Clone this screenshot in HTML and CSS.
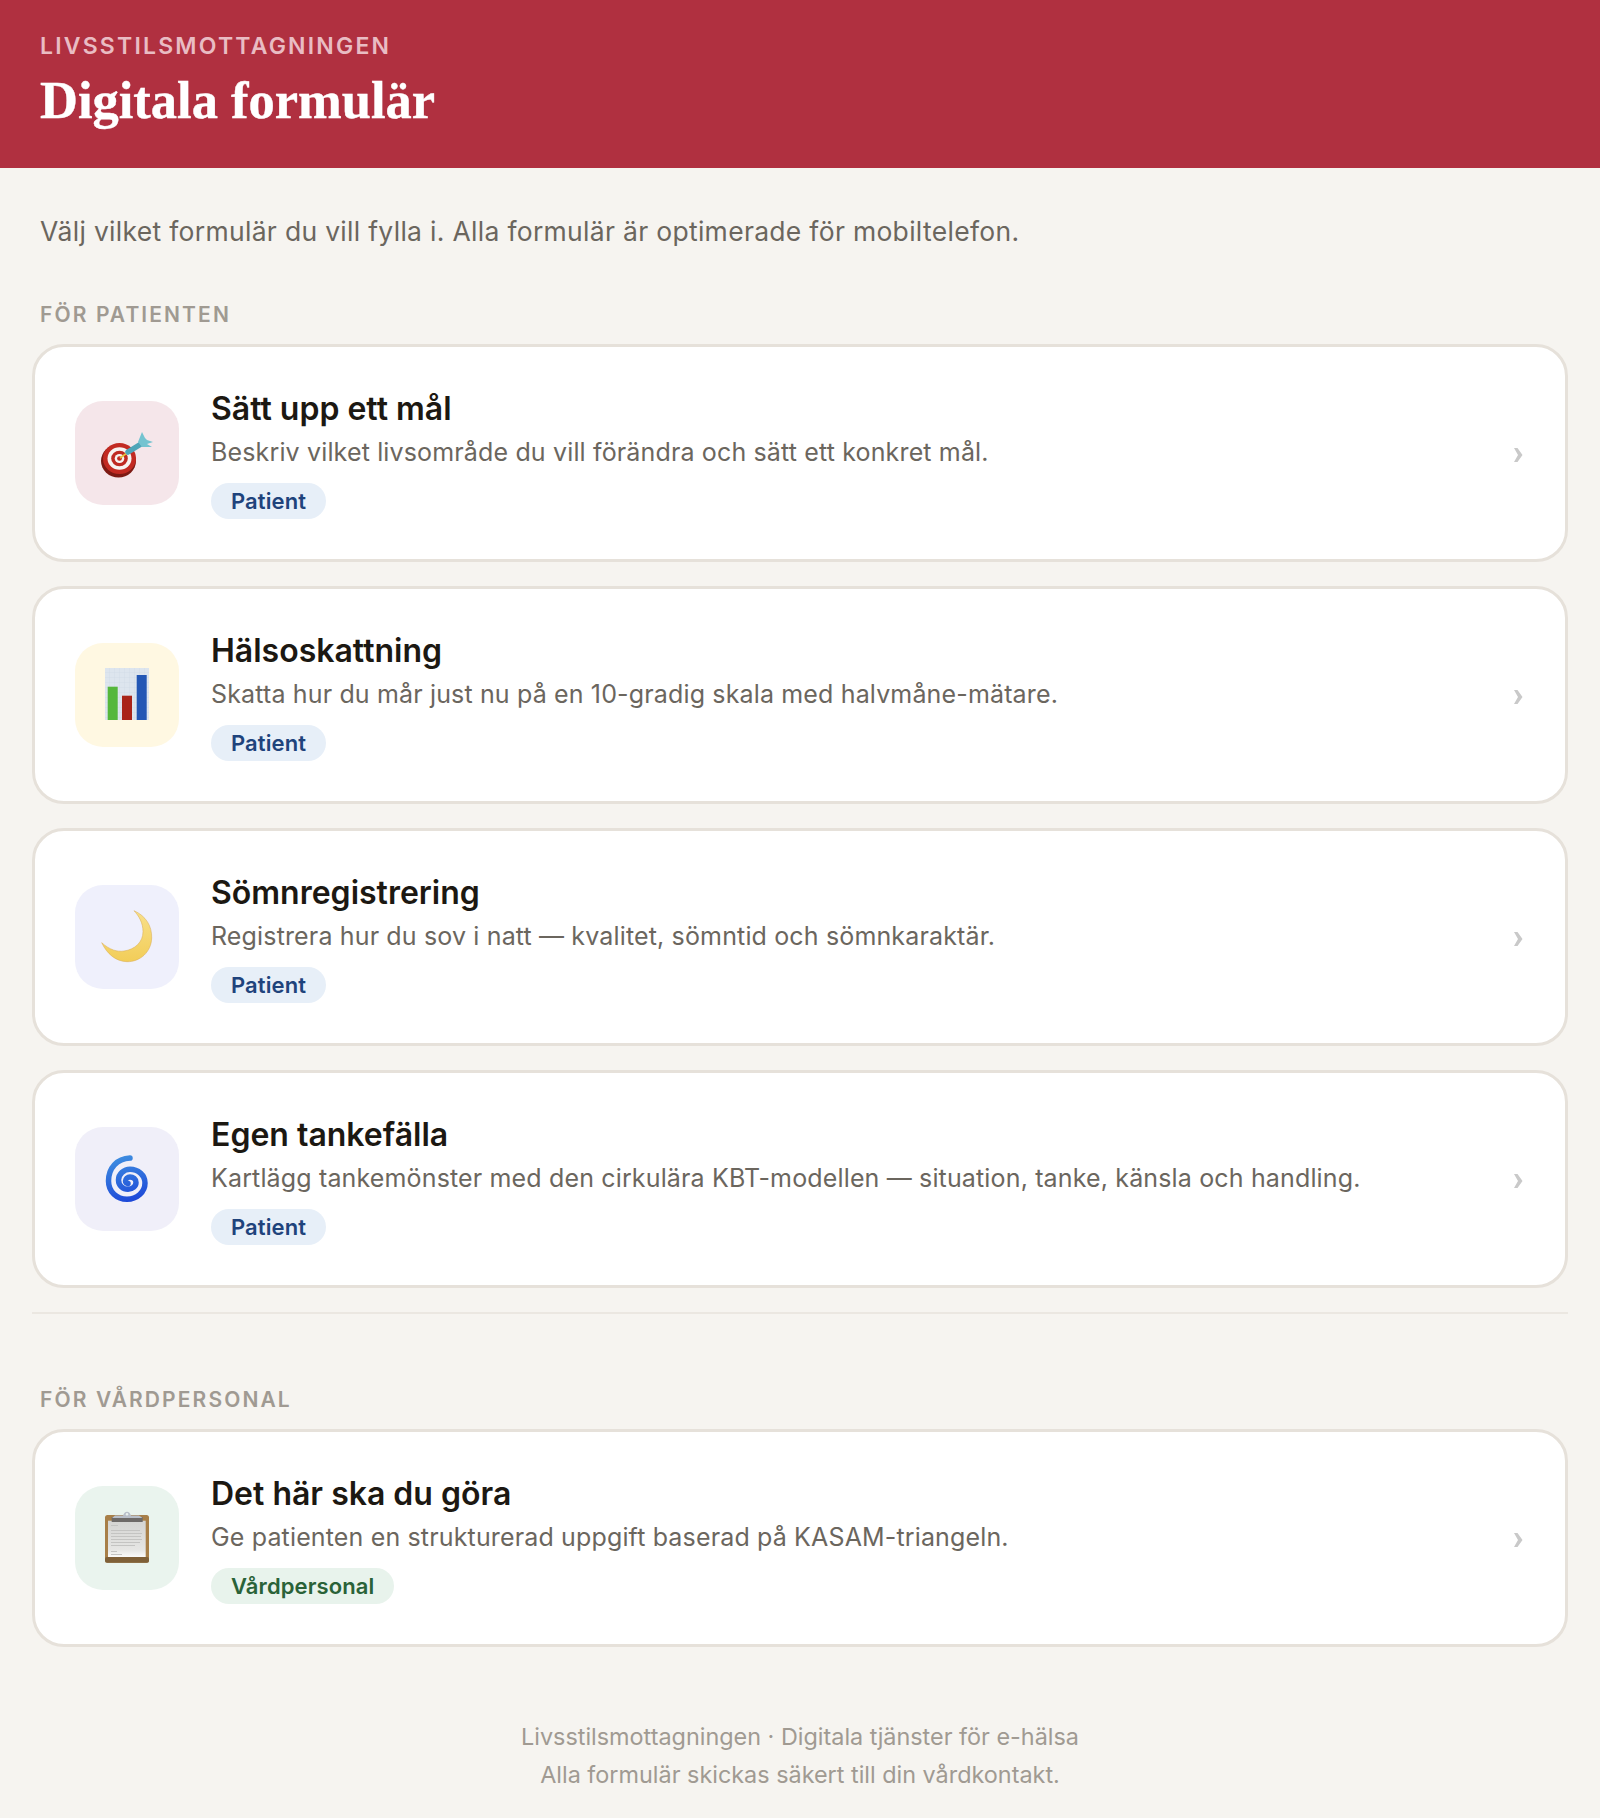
FILE: index.html
```html
<!DOCTYPE html>
<html lang="sv">
    <head>
        <meta charset="utf-8" />
        <title>Digitala formulär</title>
        <link rel="stylesheet" href="styles.css">
    </head>
    <body>
        <header class="top">
            <div class="eyebrow">LIVSSTILSMOTTAGNINGEN</div>
            <h1>Digitala formulär</h1>
        </header>

        <main class="content">
            <p class="intro">Välj vilket formulär du vill fylla i. Alla formulär är optimerade för mobiltelefon.</p>

            <div class="section_label">FÖR PATIENTEN</div>
            <div class="card_list">
                <a class="card">
                    <span class="icon icon_goal">
                        <svg width="56" height="56" viewBox="0 0 56 56">
                            <ellipse cx="19.5" cy="36" rx="17.5" ry="16.5" fill="#7d1a14"/>
                            <ellipse cx="20.5" cy="33.5" rx="16.5" ry="15.5" fill="#c22a22"/>
                            <ellipse cx="20.5" cy="33.5" rx="12" ry="11.3" fill="#f7f3f1"/>
                            <ellipse cx="20.5" cy="33.5" rx="8.3" ry="7.8" fill="#bf2a22"/>
                            <ellipse cx="20.5" cy="33.5" rx="4.8" ry="4.5" fill="#f7f3f1"/>
                            <ellipse cx="20.5" cy="33.5" rx="2.4" ry="2.2" fill="#c22a22"/>
                            <path d="M21 33 L28 28" stroke="#e8c23c" stroke-width="1.6"/>
                            <path d="M29 27 L42 19" stroke="#4fa5b8" stroke-width="5.5" stroke-linecap="round"/>
                            <path d="M39 17 L43 7 L46 13 L48 15 L54 17 L48 19 L53 22 L43 22 Z" fill="#74c3d0"/>
                        </svg>
                    </span>
                    <span class="card_text">
                        <span class="card_title">Sätt upp ett mål</span>
                        <span class="card_desc">Beskriv vilket livsområde du vill förändra och sätt ett konkret mål.</span>
                        <span class="badge badge_patient">Patient</span>
                    </span>
                    <svg class="chevron" width="10" height="16" viewBox="0 0 10 16"><path d="M1 1 H4.5 L9.5 8 L4.5 15 H1 L5 8 Z" fill="#c9c9c9"/></svg>
                </a>

                <a class="card">
                    <span class="icon icon_rating">
                        <svg width="56" height="56" viewBox="0 0 56 56">
                            <defs>
                                <pattern id="chart_grid" width="5" height="5" patternUnits="userSpaceOnUse">
                                    <rect width="5" height="5" fill="#dde5ee"/>
                                    <path d="M0 0 H5 M0 0 V5" stroke="#ccd7e3" stroke-width="0.6"/>
                                </pattern>
                            </defs>
                            <rect x="6" y="1" width="44" height="52" fill="url(#chart_grid)"/>
                            <rect x="8.7" y="19.7" width="10" height="33.3" fill="#55b73c"/>
                            <rect x="23" y="28.7" width="10" height="24.3" fill="#a92419"/>
                            <rect x="37.7" y="8" width="10" height="45" fill="#2357b5"/>
                        </svg>
                    </span>
                    <span class="card_text">
                        <span class="card_title">Hälsoskattning</span>
                        <span class="card_desc">Skatta hur du mår just nu på en 10-gradig skala med halvmåne-mätare.</span>
                        <span class="badge badge_patient">Patient</span>
                    </span>
                    <svg class="chevron" width="10" height="16" viewBox="0 0 10 16"><path d="M1 1 H4.5 L9.5 8 L4.5 15 H1 L5 8 Z" fill="#c9c9c9"/></svg>
                </a>

                <a class="card">
                    <span class="icon icon_sleep">
                        <svg width="56" height="56" viewBox="0 0 56 56">
                            <defs>
                                <linearGradient id="moon_fill" x1="0" y1="0" x2="0" y2="1">
                                    <stop offset="0" stop-color="#f8e08a"/>
                                    <stop offset="1" stop-color="#f2cd58"/>
                                </linearGradient>
                            </defs>
                            <path d="M35 1.7 C47 7 53 17 52.7 29 C52.3 43 41 53 28 52.7 C17 52.5 8 45 2.7 33.7 C11 41 18 43 25 42 C36 40.5 44 33 44 22.7 C44 14 40 7 35 1.7 Z" fill="url(#moon_fill)" stroke="#d9a94a" stroke-width="0.5"/>
                        </svg>
                    </span>
                    <span class="card_text">
                        <span class="card_title">Sömnregistrering</span>
                        <span class="card_desc">Registrera hur du sov i natt — kvalitet, sömntid och sömnkaraktär.</span>
                        <span class="badge badge_patient">Patient</span>
                    </span>
                    <svg class="chevron" width="10" height="16" viewBox="0 0 10 16"><path d="M1 1 H4.5 L9.5 8 L4.5 15 H1 L5 8 Z" fill="#c9c9c9"/></svg>
                </a>

                <a class="card">
                    <span class="icon icon_thought">
                        <svg width="56" height="56" viewBox="0 0 56 56">
                            <defs>
                                <linearGradient id="spiral_stroke" gradientUnits="userSpaceOnUse" x1="20" y1="4" x2="32" y2="52">
                                    <stop offset="0" stop-color="#3f8fe0"/>
                                    <stop offset="1" stop-color="#1c46d8"/>
                                </linearGradient>
                            </defs>
                            <path d="M31 7 C18 7.5 9.500 17 9.500 30 C9.500 41 18 48.300 28 48.300 C38 48.300 46 41 46 32 C46 24 39 18.300 31 18.300 C25 18.300 19.500 23 19.500 29 C19.500 34.500 24 38.300 29 38.300 C33.500 38.300 37 35 37 31.500 C37 28 34 26 31 26 C28.500 26 26.500 28 26.500 30 C26.500 31.500 27.500 32.500 29 32.500" fill="none" stroke="url(#spiral_stroke)" stroke-width="5.500" stroke-linecap="round"/>
                        </svg>
                    </span>
                    <span class="card_text">
                        <span class="card_title">Egen tankefälla</span>
                        <span class="card_desc">Kartlägg tankemönster med den cirkulära KBT-modellen — situation, tanke, känsla och handling.</span>
                        <span class="badge badge_patient">Patient</span>
                    </span>
                    <svg class="chevron" width="10" height="16" viewBox="0 0 10 16"><path d="M1 1 H4.5 L9.5 8 L4.5 15 H1 L5 8 Z" fill="#c9c9c9"/></svg>
                </a>
            </div>

            <hr class="divider" />

            <div class="section_label">FÖR VÅRDPERSONAL</div>
            <div class="card_list">
                <a class="card">
                    <span class="icon icon_task">
                        <svg width="56" height="56" viewBox="0 0 56 56">
                            <defs>
                                <linearGradient id="paper_fill" x1="0" y1="0" x2="0" y2="1">
                                    <stop offset="0" stop-color="#d4d4d2"/>
                                    <stop offset="0.8" stop-color="#e6e6e4"/>
                                    <stop offset="1" stop-color="#fbfbfa"/>
                                </linearGradient>
                            </defs>
                            <rect x="6" y="5" width="44" height="47.7" rx="2.5" fill="#a87f48"/>
                            <rect x="6" y="47" width="44" height="5.7" rx="2" fill="#7f6038"/>
                            <rect x="9" y="10.7" width="37.7" height="36.3" fill="url(#paper_fill)"/>
                            <g fill="#c4c4c2">
                                <rect x="12" y="15" width="7" height="1"/>
                                <rect x="12" y="20" width="29" height="1"/>
                                <rect x="12" y="23" width="31" height="1"/>
                                <rect x="12" y="26" width="30" height="1"/>
                                <rect x="12" y="29" width="31" height="1"/>
                                <rect x="12" y="32" width="29" height="1"/>
                                <rect x="12" y="35" width="24" height="1"/>
                                <rect x="12" y="41" width="6" height="1"/>
                                <rect x="12" y="44" width="11" height="1"/>
                            </g>
                            <rect x="12.7" y="7" width="31" height="5" fill="#6e6a68"/>
                            <path d="M13 8 L16 5.5 H24 C25 3 26 1.7 28 1.7 C30 1.7 31 3 32 5.5 H40 L43.5 8 Z" fill="#b9bfc9"/>
                            <circle cx="28" cy="4.2" r="1.2" fill="#eaf0ed"/>
                        </svg>
                    </span>
                    <span class="card_text">
                        <span class="card_title">Det här ska du göra</span>
                        <span class="card_desc">Ge patienten en strukturerad uppgift baserad på KASAM-triangeln.</span>
                        <span class="badge badge_staff">Vårdpersonal</span>
                    </span>
                    <svg class="chevron" width="10" height="16" viewBox="0 0 10 16"><path d="M1 1 H4.5 L9.5 8 L4.5 15 H1 L5 8 Z" fill="#c9c9c9"/></svg>
                </a>
            </div>

            <footer class="page_footer">
                Livsstilsmottagningen · Digitala tjänster för e-hälsa<br />
                Alla formulär skickas säkert till din vårdkontakt.
            </footer>
        </main>
    </body>
</html>
```

FILE: styles.css
```css
* {
    box-sizing: border-box;
}

body {
    margin: 0;
    background-color: #f6f4f0;
    font-family: Inter, "Liberation Sans", sans-serif;
    color: #1c1812;
}

.top {
    height: 168px;
    padding: 31px 40px 0;
    background-color: #b03040;
}

.eyebrow {
    font-size: 23px;
    line-height: 30px;
    font-weight: 600;
    letter-spacing: 2.2px;
    color: #e9bcc3;
}

h1 {
    margin: 9px 0 0;
    font-family: "Liberation Serif", serif;
    font-size: 52.5px;
    line-height: 60px;
    font-weight: bold;
    color: white;
    -webkit-text-stroke: 0.4px white;
}

.content {
    padding: 0 32px;
}

.intro {
    margin: 0;
    padding: 45px 8px 0;
    font-size: 26.5px;
    line-height: 36px;
    letter-spacing: 0.3px;
    color: #6b665e;
}

.section_label {
    margin-top: 52px;
    padding: 0 8px;
    font-size: 21px;
    line-height: 28px;
    font-weight: 600;
    letter-spacing: 2.1px;
    color: #a09a92;
}

.card_list {
    display: flex;
    flex-direction: column;
    gap: 24px;
    margin-top: 15px;
}

.card {
    display: flex;
    align-items: center;
    height: 218px;
    padding: 0 42px 0 40px;
    background-color: white;
    border: 3px solid #e6e1da;
    border-radius: 32px;
}

.icon {
    flex: none;
    display: flex;
    align-items: center;
    justify-content: center;
    width: 104px;
    height: 104px;
    margin-right: 32px;
    border-radius: 28px;
}

.icon_goal {
    background-color: #f5e6ea;
}

.icon_rating {
    background-color: #fff8e2;
}

.icon_sleep {
    background-color: #eff0fc;
}

.icon_thought {
    background-color: #f0eff9;
}

.icon_task {
    background-color: #eaf4ee;
}

.card_text {
    flex: 1;
    display: flex;
    flex-direction: column;
    align-items: flex-start;
    padding-top: 2px;
}

.card_title {
    font-size: 32px;
    line-height: 40px;
    font-weight: 600;
    color: #1c1812;
}

.card_desc {
    margin-top: 5px;
    font-size: 25px;
    line-height: 36px;
    letter-spacing: 0.15px;
    color: #6b665e;
}

.badge {
    margin-top: 13px;
    padding: 0 20px;
    font-size: 22px;
    line-height: 36px;
    font-weight: 600;
    letter-spacing: 0.1px;
    border-radius: 18px;
}

.badge_patient {
    background-color: #e7eff8;
    color: #1f437c;
}

.badge_staff {
    background-color: #e8f3ec;
    color: #2a6238;
}

.chevron {
    flex: none;
    margin-top: 4px;
}

.divider {
    height: 2px;
    margin: 24px 0 0;
    border: 0;
    background-color: #ebe7e1;
}

.divider + .section_label {
    margin-top: 72px;
}

.page_footer {
    margin-top: 71px;
    font-size: 23.4px;
    line-height: 38px;
    text-align: center;
    color: #a09a92;
}
```
